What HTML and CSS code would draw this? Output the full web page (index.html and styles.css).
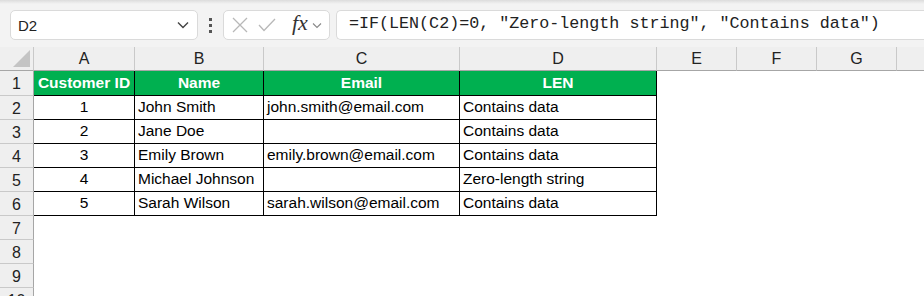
FILE: index.html
```html
<!DOCTYPE html>
<html>
  <head>
    <meta charset="utf-8">
    <title>LEN check</title>
    <link rel="stylesheet" href="styles.css">
  </head>
  <body>
    <div class="bar">
      <div class="namebox">
        <span>D2</span>
        <svg class="chev" width="12" height="8" viewBox="0 0 12 8"><path d="M1 1.5 L6 6.5 L11 1.5" fill="none" stroke="#444" stroke-width="1.4"/></svg>
      </div>
      <div class="dots"><i></i><i></i><i></i></div>
      <div class="fxbox">
        <svg width="16" height="16" viewBox="0 0 16 16"><path d="M1 1 L15 15 M15 1 L1 15" stroke="#b8b8b8" stroke-width="1.3"/></svg>
        <svg width="18" height="14" viewBox="0 0 18 14"><path d="M1 7 L6 12.5 L17 1" fill="none" stroke="#b8b8b8" stroke-width="1.3"/></svg>
        <span class="fx">fx</span>
        <svg width="10" height="7" viewBox="0 0 10 7"><path d="M1 1.5 L5 5.5 L9 1.5" fill="none" stroke="#888" stroke-width="1.1"/></svg>
      </div>
      <div class="formula">=IF(LEN(C2)=0, "Zero-length string", "Contains data")</div>
    </div>

    <div class="sheet">
      <div class="hd corner"><span class="tri"></span></div>
      <div class="hd col">A</div>
      <div class="hd col">B</div>
      <div class="hd col">C</div>
      <div class="hd col">D</div>
      <div class="hd col">E</div>
      <div class="hd col">F</div>
      <div class="hd col">G</div>
      <div class="hd col last"></div>

      <div class="hd row r1">1</div>
      <div class="c th">Customer ID</div>
      <div class="c th">Name</div>
      <div class="c th">Email</div>
      <div class="c th">LEN</div>
      <div class="c"></div><div class="c"></div><div class="c"></div><div class="c"></div>

      <div class="hd row">2</div>
      <div class="c td num">1</div>
      <div class="c td">John Smith</div>
      <div class="c td">john.smith@email.com</div>
      <div class="c td">Contains data</div>
      <div class="c"></div><div class="c"></div><div class="c"></div><div class="c"></div>

      <div class="hd row">3</div>
      <div class="c td num">2</div>
      <div class="c td">Jane Doe</div>
      <div class="c td"></div>
      <div class="c td">Contains data</div>
      <div class="c"></div><div class="c"></div><div class="c"></div><div class="c"></div>

      <div class="hd row">4</div>
      <div class="c td num">3</div>
      <div class="c td">Emily Brown</div>
      <div class="c td">emily.brown@email.com</div>
      <div class="c td">Contains data</div>
      <div class="c"></div><div class="c"></div><div class="c"></div><div class="c"></div>

      <div class="hd row">5</div>
      <div class="c td num">4</div>
      <div class="c td">Michael Johnson</div>
      <div class="c td"></div>
      <div class="c td">Zero-length string</div>
      <div class="c"></div><div class="c"></div><div class="c"></div><div class="c"></div>

      <div class="hd row">6</div>
      <div class="c td num">5</div>
      <div class="c td">Sarah Wilson</div>
      <div class="c td">sarah.wilson@email.com</div>
      <div class="c td">Contains data</div>
      <div class="c"></div><div class="c"></div><div class="c"></div><div class="c"></div>

      <div class="hd row">7</div>
      <div class="c"></div><div class="c"></div><div class="c"></div><div class="c"></div>
      <div class="c"></div><div class="c"></div><div class="c"></div><div class="c"></div>

      <div class="hd row">8</div>
      <div class="c"></div><div class="c"></div><div class="c"></div><div class="c"></div>
      <div class="c"></div><div class="c"></div><div class="c"></div><div class="c"></div>

      <div class="hd row">9</div>
      <div class="c"></div><div class="c"></div><div class="c"></div><div class="c"></div>
      <div class="c"></div><div class="c"></div><div class="c"></div><div class="c"></div>

      <div class="hd row">10</div>
      <div class="c"></div><div class="c"></div><div class="c"></div><div class="c"></div>
      <div class="c"></div><div class="c"></div><div class="c"></div><div class="c"></div>
    </div>
  </body>
</html>
```

FILE: styles.css
```css
* {
  box-sizing: border-box;
}
body {
  margin: 0;
  background: #fff;
  font-family: "Liberation Sans", Arial, sans-serif;
  overflow: hidden;
}

/* formula bar */
.bar {
  height: 47px;
  background: linear-gradient(#dcdcdc 0, #f3f3f3 4px);
  display: flex;
  align-items: flex-start;
  padding: 10px 0 0 10px;
  overflow: hidden;
}
.bar > div {
  flex-shrink: 0;
}
.namebox {
  width: 188px;
  height: 30px;
  background: #fff;
  border: 1px solid #dadada;
  border-radius: 5px;
  display: flex;
  align-items: center;
  justify-content: space-between;
  padding: 0 8px 0 7px;
  font-size: 15px;
  color: #222;
}
.dots {
  width: 25px;
  height: 30px;
  display: flex;
  flex-direction: column;
  align-items: center;
  justify-content: center;
  gap: 3px;
}
.dots i {
  width: 3px;
  height: 3px;
  background: #555;
}
.fxbox {
  width: 107px;
  height: 30px;
  background: #fff;
  border: 1px solid #dadada;
  border-radius: 5px;
  display: flex;
  align-items: center;
  padding: 0 4px 0 8px;
  gap: 10px;
}
.fxbox .fx {
  font-family: "Liberation Serif", serif;
  font-style: italic;
  font-size: 22px;
  color: #333;
  margin: -4px -6px 0 6px;
}
.formula {
  width: 620px;
  height: 30px;
  margin-left: 6px;
  background: #fff;
  border: 1px solid #dadada;
  border-right: none;
  border-radius: 5px 0 0 5px;
  padding: 3px 0 0 12px;
  font-family: "Liberation Mono", monospace;
  font-size: 16.7px;
  color: #222;
  white-space: nowrap;
}

/* sheet grid */
.sheet {
  display: grid;
  grid-template-columns: 34px 101px 129px 196px 197px 80px 80px 80px 1fr;
  grid-template-rows: 24px 25px repeat(9, 24px);
}
.hd {
  background: #efefef;
  color: #222;
  font-size: 16px;
  display: flex;
  align-items: center;
  justify-content: center;
}
.hd.col {
  border-right: 1px solid #c9c9c9;
  border-bottom: 1px solid #a6a6a6;
  padding-top: 1px;
}
.hd.col.last {
  border-right: none;
}
.hd.corner {
  border-right: 1px solid #c9c9c9;
  border-bottom: 1px solid #a6a6a6;
  position: relative;
}
.tri {
  position: absolute;
  right: 3px;
  bottom: 3px;
  width: 0;
  height: 0;
  border-left: 17px solid transparent;
  border-bottom: 17px solid #c4c4c4;
}
.hd.row {
  border-right: 1px solid #a6a6a6;
  border-bottom: 1px solid #c9c9c9;
  padding-top: 2px;
}

.c {
  font-size: 15.5px;
  color: #000;
  white-space: nowrap;
  display: flex;
  align-items: flex-end;
  padding: 0 0 3px 3px;
}
.th {
  background: #00b050;
  color: #fff;
  font-weight: bold;
  justify-content: center;
  padding-left: 0;
  border-right: 1px solid #000;
  border-bottom: 1px solid #000;
}
.td {
  border-right: 1px solid #000;
  border-bottom: 1px solid #000;
}
.td.num {
  justify-content: center;
  padding-left: 0;
}
```
